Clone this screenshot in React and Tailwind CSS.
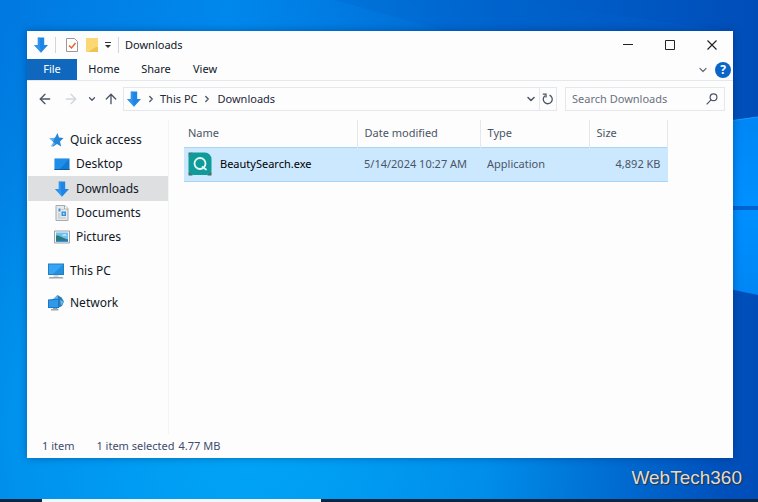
import { ArrowLeft, ArrowRight, ArrowUp, ChevronDown, ChevronRight } from "lucide-react";

const DownArrow = ({ className = "h-4 w-4" }) => (
  <svg viewBox="0 0 16 16" className={`shrink-0 ${className}`} aria-hidden="true">
    <path d="M4.800.5h6.400v7.500H15l-7 7.800L1 8h3.800z" fill="#1e87e5" />
    <path d="M4.800.5h2v8.500L8 15.800 1 8h3.800z" fill="#3d9cf0" opacity=".6" />
  </svg>
);

const StarIcon = () => (
  <svg viewBox="0 0 16 16" className="h-4 w-4 shrink-0" aria-hidden="true">
    <path d="M9.500 1l1.500 4.500 4.500.5-3.500 3.500 1.200 5-4.200-2.500L4.500 15l1-4.800L2 6.500l5-.8z" fill="#2587d8" />
    <path d="M1 6.500l5.500-.8-1 3.500zM2.500 15l3-5 2 2z" fill="#5cb2ee" />
  </svg>
);

const DesktopIcon = () => (
  <svg viewBox="0 0 16 16" className="h-4 w-4 shrink-0" aria-hidden="true">
    <path d="M.5 2.500h15v11.500H.500z" fill="#1379d2" />
    <path d="M1 3h14L6 13H1z" fill="#1e8fe8" />
    <path d="M.5 13h15v1H.500z" fill="#0d5ca8" />
  </svg>
);

const DocumentIcon = () => (
  <svg viewBox="0 0 16 16" className="h-4 w-4 shrink-0" aria-hidden="true">
    <path d="M2 .5h9l3 3v12H2z" fill="#e6eaed" stroke="#a4acb2" />
    <path d="M10.500.5v3.500H14" fill="#fff" stroke="#a4acb2" />
    <path d="M4.500 3.500h2v3h-2zM7.500 6.500h4.500v4.500H7.500z" fill="#3b92cf" />
    <path d="M9 8h1.500v1.500H9z" fill="#d8edf9" />
    <path d="M7.500 4.500h2M4 9h2.500M4 11h2.500M4 13h8" stroke="#b3c3cf" />
  </svg>
);

const PictureIcon = () => (
  <svg viewBox="0 0 16 16" className="h-4 w-4 shrink-0" aria-hidden="true">
    <path d="M.5 2h15v12H.500z" fill="#f4f6f7" stroke="#9aa3aa" />
    <path d="M2 3.500h12v9H2z" fill="#6fc0f0" />
    <path d="M2 6.500c4-.5 6 2.500 12 4v2H2z" fill="#2b7a78" />
    <path d="M2 11.500c4-.5 8-1 12-.5v1.500H2z" fill="#2479bb" />
    <path d="M8 6.500c1-1.500 4-1.500 5 0z" fill="#fff" />
  </svg>
);

const ComputerIcon = () => (
  <svg viewBox="0 0 16 16" className="h-4 w-4 shrink-0" aria-hidden="true">
    <path d="M0 .5h16v11.500H0z" fill="#237fc4" />
    <path d="M1 1.500h14v9.500H1z" fill="#36a5f3" />
    <path d="M15 1.500V11H5z" fill="#2590e2" />
    <path d="M5.500 12h5v2h-5z" fill="#d4d9dd" />
    <path d="M1.500 14h13l1 1.500H.500z" fill="#9ba5ad" />
  </svg>
);

const NetworkIcon = () => (
  <svg viewBox="0 0 16 16" className="h-4 w-4 shrink-0" aria-hidden="true">
    <path d="M9.500 0l4 2.500 2.500 4-2 4.500-6 3-3-9z" fill="#2b7db8" />
    <path d="M9.500 0l1 6L5 4zM12 5l4 1.500-3 4z" fill="#69b6e3" />
    <path d="M0 4.500l11-1v9.500H0z" fill="#1c78c5" />
    <path d="M1 5.500l9-.8v7.300H1z" fill="#2e9aeb" />
    <path d="M5 13h3v1h2.500v1.500H3V14h2z" fill="#9ba5ad" />
  </svg>
);

const AppIcon = () => (
  <svg viewBox="0 0 24 24" className="h-6 w-6 shrink-0" aria-hidden="true">
    <path d="M.5.500h4v4h-4zM.5 19.500h4v4h-4zM19.500 19.500h4v4h-4z" fill="#46696c" />
    <path d="M5 .5h12a6.500 6.500 0 0 1 6.500 6.500v11a5 5 0 0 1-5 5H5.500a5 5 0 0 1-5-5V5A4.500 4.500 0 0 1 5 .5z" fill="#109b98" />
    <circle cx="12" cy="11.500" r="5.500" fill="none" stroke="#e3fbfa" strokeWidth="1.800" />
    <path d="M14.500 15l3.500 2.500" stroke="#e3fbfa" strokeWidth="1.800" strokeLinecap="round" />
  </svg>
);

const RefreshIcon = () => (
  <svg viewBox="0 0 12 12" className="h-3 w-3" fill="none" stroke="currentColor" strokeWidth="1.300" aria-hidden="true">
    <path d="M7.500 2.100A4.500 4.500 0 1 1 3 2.700" />
    <path d="M.8 1.200h3.200v3.300" />
  </svg>
);

const SearchIcon = () => (
  <svg viewBox="0 0 12 12" className="h-3 w-3 shrink-0" fill="none" stroke="currentColor" strokeWidth="1.200" aria-hidden="true">
    <circle cx="7.500" cy="4.300" r="3.400" />
    <path d="M5 6.800L.7 11.300" />
  </svg>
);

const places = [
  { name: "Desktop", icon: <DesktopIcon /> },
  { name: "Downloads", icon: <DownArrow />, active: true },
  { name: "Documents", icon: <DocumentIcon /> },
  { name: "Pictures", icon: <PictureIcon /> },
];

function Wallpaper() {
  return (
    <svg viewBox="0 0 758 502" preserveAspectRatio="none" className="absolute inset-0 h-full w-full" aria-hidden="true">
      <defs>
        <linearGradient id="sky" x1="0" y1="0" x2="1" y2="0">
          <stop offset="0" stopColor="#0079e0" />
          <stop offset=".3" stopColor="#0088ee" />
          <stop offset=".6" stopColor="#0068d2" />
          <stop offset="1" stopColor="#004db8" />
        </linearGradient>
        <radialGradient id="glow" gradientUnits="userSpaceOnUse" cx="250" cy="430" r="480">
          <stop offset="0" stopColor="#00a6f8" />
          <stop offset=".5" stopColor="#0098f0" stopOpacity=".8" />
          <stop offset="1" stopColor="#0080e0" stopOpacity="0" />
        </radialGradient>
        <linearGradient id="beam" x1="0" y1="0" x2="0" y2="1">
          <stop offset="0" stopColor="#0086f5" />
          <stop offset=".5" stopColor="#0090ff" />
          <stop offset="1" stopColor="#0086f5" />
        </linearGradient>
      </defs>
      <path d="M0 0h758v502H0z" fill="url(#sky)" />
      <path d="M0 0h758v502H0z" fill="url(#glow)" />
      <path d="M335 0l110 31h288L500 0z" fill="#0062cb" opacity=".3" />
      <path d="M700 125l58-8v178l-58-12z" fill="url(#beam)" />
      <path d="M700 125l58-8" stroke="#1b9bff" />
      <path d="M700 208h58" stroke="#0062d0" strokeWidth="4" />
    </svg>
  );
}

function TitleBar() {
  return (
    <header className="flex h-7 items-center pl-[6px]">
      <DownArrow />
      <span className="ml-[6px] h-4 w-px bg-gray-300" />
      <button aria-label="Properties" className="ml-2">
        <svg viewBox="0 0 16 16" className="h-4 w-4">
          <path d="M2.500 1.500h8l3 3v10h-11z" fill="#fff" stroke="#999" />
          <path d="M5 8.500l2.500 2.500 4-5" fill="none" stroke="#e8632c" strokeWidth="1.500" />
        </svg>
      </button>
      <button aria-label="New folder" className="ml-1">
        <svg viewBox="0 0 16 16" className="h-4 w-4">
          <path d="M2 1h12v14H2z" fill="#fbd873" />
          <path d="M12 10h2v5H4z" fill="#f0c24f" />
        </svg>
      </button>
      <button aria-label="Customize Quick Access Toolbar" className="ml-1">
        <svg viewBox="0 0 8 8" className="h-2 w-2">
          <path d="M1 1.500h6" stroke="#333" />
          <path d="M1 4h6L4 7z" fill="#333" />
        </svg>
      </button>
      <span className="ml-[6px] h-4 w-px bg-gray-300" />
      <h1 className="ml-[6px] grow text-[11px]">Downloads</h1>
      <button aria-label="Minimize" className="flex w-[42px] justify-center">
        <svg viewBox="0 0 12 12" className="h-3 w-3"><path d="M1 5.500h10" stroke="#222" /></svg>
      </button>
      <button aria-label="Maximize" className="flex w-[42px] justify-center">
        <svg viewBox="0 0 12 12" className="h-3 w-3"><path d="M1.500 1.500h9v9h-9z" fill="none" stroke="#222" /></svg>
      </button>
      <button aria-label="Close" className="flex w-[42px] justify-center">
        <svg viewBox="0 0 12 12" className="h-3 w-3"><path d="M1.500 1.500l9 9m0-9l-9 9" stroke="#222" strokeWidth="1.200" /></svg>
      </button>
    </header>
  );
}

function Ribbon() {
  return (
    <nav className="flex h-[22px] items-stretch border-b border-gray-200 text-[11px]">
      <button className="w-[50px] bg-[#0f68bd] text-white">File</button>
      <button className="w-[54px]">Home</button>
      <button className="w-[50px]">Share</button>
      <button className="w-12">View</button>
      <button aria-label="Expand the ribbon" className="mr-[6px] ml-auto text-gray-500">
        <ChevronDown className="h-3 w-3" strokeWidth={2.5} />
      </button>
      <button aria-label="Help" className="mr-[2px] flex w-4 items-center">
        <span className="flex h-4 w-4 items-center justify-center rounded-full bg-[#0b65c8] text-xs font-bold text-white">?</span>
      </button>
    </nav>
  );
}

function AddressBar() {
  return (
    <div className="mt-[6px] flex h-6 items-center pr-2 pl-[10px] text-[11px] text-gray-600">
      <button aria-label="Back"><ArrowLeft className="h-4 w-4" /></button>
      <button aria-label="Forward" className="ml-[10px] text-gray-300"><ArrowRight className="h-4 w-4" /></button>
      <button aria-label="Recent locations" className="ml-2"><ChevronDown className="h-[10px] w-[10px]" strokeWidth={3} /></button>
      <button aria-label="Up" className="ml-[6px]"><ArrowUp className="h-4 w-4" /></button>
      <div className="ml-1 flex h-full grow items-center border border-gray-200 pl-[2px]">
        <DownArrow />
        <ChevronRight className="ml-1 h-[10px] w-[10px]" strokeWidth={3} />
        <a href="#this-pc" className="ml-1 text-gray-800">This PC</a>
        <ChevronRight className="ml-1 h-[10px] w-[10px]" strokeWidth={3} />
        <a href="#downloads" className="ml-[6px] text-gray-800">Downloads</a>
        <button aria-label="Previous locations" className="mr-[2px] ml-auto"><ChevronDown className="h-3 w-3" strokeWidth={3} /></button>
        <button aria-label="Refresh" className="flex h-full w-[17px] items-center justify-center border-l border-gray-200">
          <RefreshIcon />
        </button>
      </div>
      <label className="ml-2 flex h-full w-[160px] items-center border border-gray-200 px-[6px]">
        <input type="search" aria-label="Search Downloads" placeholder="Search Downloads" className="w-full min-w-0 outline-none placeholder:text-gray-500" />
        <SearchIcon />
      </label>
    </div>
  );
}

function Sidebar() {
  return (
    <aside className="w-[142px] shrink-0 border-r border-gray-100 pt-2 text-xs">
      <a href="#quick-access" className="flex h-6 items-center gap-[6px] pl-[21px]"><StarIcon />Quick access</a>
      {places.map((place) => (
        <a
          key={place.name}
          href={`#${place.name.toLowerCase()}`}
          className={`ml-px flex items-center gap-[6px] pl-[26px] ${place.active ? "h-[25px] bg-[#dedfe1]" : "h-6"}`}
        >
          {place.icon}
          {place.name}
        </a>
      ))}
      <a href="#this-pc" className="mt-[10px] flex h-6 items-center gap-[6px] pl-[21px]"><ComputerIcon />This PC</a>
      <a href="#network" className="mt-2 flex h-6 items-center gap-[6px] pl-[21px]"><NetworkIcon />Network</a>
    </aside>
  );
}

function FileList() {
  return (
    <main className="grow pr-[65px] pl-[15px]">
      <table className="w-full table-fixed border-collapse text-left text-[11px] text-gray-600">
        <thead>
          <tr className="h-[27px]">
            <th className="w-[173px] border-r border-gray-200 pl-1 font-normal">Name</th>
            <th className="w-[123px] border-r border-gray-200 pl-[7px] font-normal">Date modified</th>
            <th className="w-[109px] border-r border-gray-200 pl-[7px] font-normal">Type</th>
            <th className="border-r border-gray-200 pl-[7px] font-normal">Size</th>
          </tr>
        </thead>
        <tbody>
          <tr className="h-[34px] border-y border-[#a9d5f2] bg-[#cce8ff]">
            <td className="pl-1 text-black">
              <div className="flex items-center gap-2"><AppIcon />BeautySearch.exe</div>
            </td>
            <td className="pl-[7px] whitespace-nowrap">5/14/2024 10:27 AM</td>
            <td className="pl-[7px]">Application</td>
            <td className="pr-[7px] text-right">4,892 KB</td>
          </tr>
        </tbody>
      </table>
    </main>
  );
}

export default function App() {
  return (
    <div className="relative isolate flex min-h-screen flex-col font-['Noto_Sans',sans-serif] text-gray-900">
      <Wallpaper />
      <section className="relative mt-[31px] mr-[25px] ml-[27px] flex grow flex-col bg-[#fdfdfd] shadow-[0_0_8px_rgba(0,30,90,0.4)]">
        <TitleBar />
        <Ribbon />
        <AddressBar />
        <div className="mt-[9px] flex grow">
          <Sidebar />
          <FileList />
        </div>
        <footer className="flex h-6 items-center pl-[15px] text-[11px] text-[#414b70]">
          <span>1 item</span>
          <span className="ml-[22px]">1 item selected</span>
          <span className="ml-1">4.77 MB</span>
        </footer>
      </section>
      <div className="relative flex h-[41px] items-center justify-end pr-4 font-['Liberation_Sans',sans-serif] text-[19px] text-[#d9dde2] [text-shadow:0_0_1px_#333,1px_1px_1px_#333]">
        WebTech360
      </div>
      <div className="relative h-[3px] bg-[#0b2545] pl-[42px]">
        <div className="h-full w-[39%] bg-[#f3f7fb]" />
      </div>
    </div>
  );
}
